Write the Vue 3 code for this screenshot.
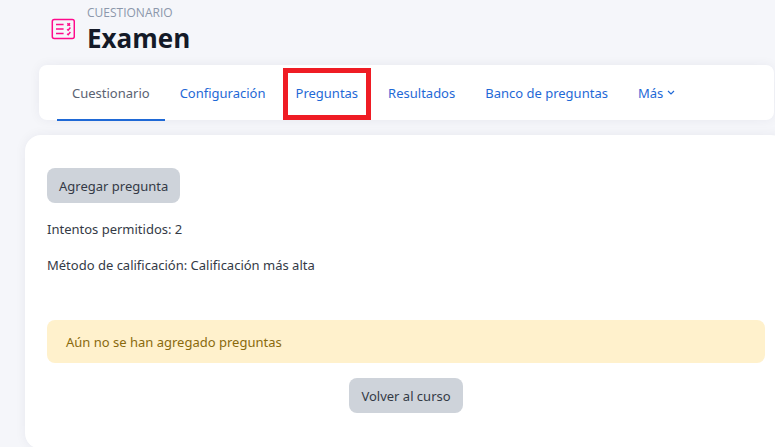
<script setup>
const tabs = [
  { label: 'Cuestionario', active: true },
  { label: 'Configuración' },
  { label: 'Preguntas', marked: true },
  { label: 'Resultados' },
  { label: 'Banco de preguntas' },
]
</script>

<template>
  <div class="page">
    <header class="heading">
      <svg class="quiz-icon" viewBox="0 0 24 24" fill="none" aria-hidden="true">
        <rect x="1.3" y="2.5" width="22" height="19" rx="2" stroke="#ff0a8c" stroke-width="1.5" />
        <path d="M5 7.5h7.6M5 12h7.6M5 16.5h7.6" stroke="#ff0a8c" stroke-width="1.3" />
        <path d="M16.4 6.2l2.6 2.6M19 6.2l-2.6 2.6M16.2 12.2l1 1 2.2-2.6M16.2 16.7l1 1 2.2-2.6" stroke="#ff0a8c" stroke-width="1.5" />
      </svg>
      <div>
        <div class="kind">CUESTIONARIO</div>
        <h1>Examen</h1>
      </div>
    </header>

    <nav class="tabs">
      <a
        v-for="tab in tabs"
        :key="tab.label"
        href="#"
        class="tab"
        :class="{ active: tab.active, marked: tab.marked }"
      >{{ tab.label }}</a>
      <a href="#" class="tab">Más
        <svg class="chevron" viewBox="0 0 8 8" fill="none" aria-hidden="true">
          <path d="M1 2l3 3 3-3" stroke="currentColor" stroke-width="1.2" />
        </svg>
      </a>
    </nav>

    <main class="card">
      <button type="button" class="btn">Agregar pregunta</button>
      <p>Intentos permitidos: 2</p>
      <p>Método de calificación: Calificación más alta</p>
      <div class="alert" role="alert">Aún no se han agregado preguntas</div>
      <button type="button" class="btn back">Volver al curso</button>
    </main>
  </div>
</template>

<style>
body {
  background: #f5f6fa;
}
</style>

<style scoped>
.page {
  box-sizing: border-box;
  min-height: 100vh;
  overflow: hidden;
  padding-left: 25px;
  background: #f5f6fa;
  color: #343a46;
  font-family: "Segoe UI", "Noto Sans", sans-serif;
  font-size: 13px;
  line-height: 20px;
}
.heading {
  display: flex;
  gap: 12px;
  height: 65px;
  box-sizing: border-box;
  padding: 5px 0 0 26px;
}
.quiz-icon {
  width: 24px;
  height: 24px;
  margin-top: 12px;
}
.kind {
  color: #8c97ab;
  font-family: "Segoe UI", "Open Sans", sans-serif;
  font-size: 12px;
  line-height: 16px;
}
h1 {
  margin: 0;
  color: #141a28;
  font-family: "Segoe UI", "Open Sans", sans-serif;
  font-size: 26px;
  font-weight: 700;
  line-height: 34px;
}
.tabs {
  display: flex;
  height: 55px;
  margin: 0 1px 15px 14px;
  padding-left: 18px;
  box-sizing: border-box;
  border-radius: 8px;
  background: #fff;
  box-shadow: 0 0 12px rgba(30, 40, 60, 0.06);
}
.tab {
  position: relative;
  display: flex;
  align-items: center;
  gap: 4px;
  padding: 1px 15px 0;
  color: #1f69d6;
  text-decoration: none;
  white-space: nowrap;
}
.tab.active {
  color: #5a6272;
}
.tab.active::after {
  content: "";
  position: absolute;
  right: 0;
  bottom: -1px;
  left: 0;
  height: 2px;
  background: #1f69d6;
}
.tab.marked::before {
  content: "";
  position: absolute;
  inset: 3px 2px 0;
  border: 5px solid #ef1c24;
}
.chevron {
  width: 8px;
  height: 8px;
}
.card {
  display: flex;
  flex-direction: column;
  align-items: flex-start;
  margin-right: -12px;
  padding: 33px 22px 36px;
  border-radius: 16px;
  background: #fff;
  box-shadow: 0 0 12px rgba(30, 40, 60, 0.06);
}
p {
  margin: 16px 0 0;
}
.btn {
  height: 35px;
  padding: 0 12px;
  border: 0;
  border-radius: 8px;
  background: #ced3da;
  color: #343a46;
  font: inherit;
}
.alert {
  align-self: stretch;
  margin-top: 45px;
  padding: 12px 19px 11px;
  border-radius: 8px;
  background: #fff1cc;
  color: #8a6a0c;
}
.back {
  align-self: center;
  margin-top: 15px;
}
</style>
